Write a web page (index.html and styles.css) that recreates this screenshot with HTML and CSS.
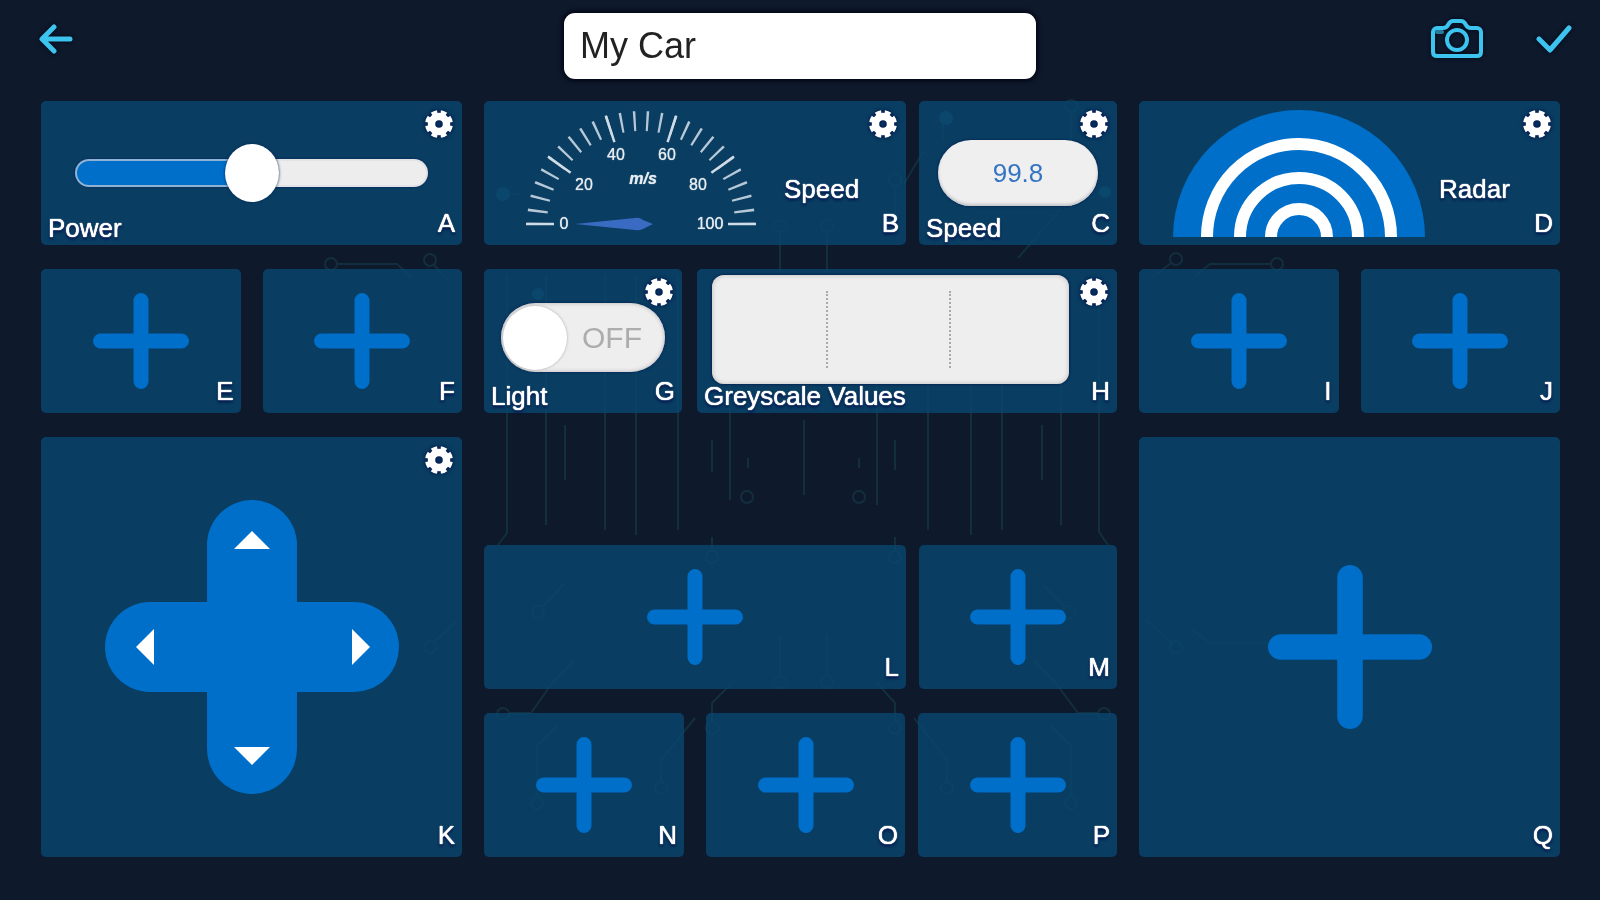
FILE: index.html
```html
<!DOCTYPE html>
<html lang="en">
<head>
  <meta charset="UTF-8">
  <meta name="viewport" content="width=device-width, initial-scale=1.0">
  <title>My Car</title>
  <link rel="stylesheet" href="styles.css">
</head>
<body>
  <!-- Shared icons -->
  <svg class="sprite" aria-hidden="true">
    <symbol id="gear" viewBox="0 0 28 28">
      <circle cx="14" cy="14" r="7.5" fill="none" stroke="#fff" stroke-width="7.4"/>
      <circle cx="14" cy="14" r="11.7" fill="none" stroke="#fff" stroke-width="4.4" pathLength="8" stroke-dasharray="0.62 0.38" stroke-dashoffset="-0.19"/>
    </symbol>
    <symbol id="plus" viewBox="0 0 96 96">
      <path d="M48 7.5v81M7.5 48h81" fill="none" stroke="#006fc9" stroke-width="15" stroke-linecap="round"/>
    </symbol>
    <symbol id="arrow" viewBox="0 0 36 18">
      <path d="M0 18L18 0l18 18z" fill="#fff"/>
    </symbol>
  </svg>

  <!-- Circuit board background -->
  <svg class="circuit" viewBox="0 0 1600 900" preserveAspectRatio="xMidYMid slice" aria-hidden="true">
    <path d="M507 275V533l-9 12M546 275V525M605 275V530M636 275V535M678 275V530M730 275V500M877 275V505M928 275V530M971 275V535M1002 275V530M1061 275V525M1099 275V532l9 13"/>
    <path d="M565 425v55M712 440v32M748 458v10M804 420v75M859 458v10M895 440v30M1042 425v55"/>
    <path d="M780 232v40M827 232v40M895 186v40M943 118v24M1071 112v28M503 194h16M924 150l-20 34M1060 210l-42 48"/>
    <path d="M337 264h60l15 14M434 265l14 15M1271 264h-61l-15 12M1171 263l-18 14"/>
    <path d="M434 642l22-20M1171 642l-26-23M1190 628l20 15h60"/>
    <path d="M712 537v14M895 537v14M565 583l-23 24M1043 585l22 22"/>
    <path d="M780 635v41M827 635v41M575 660l-22 22-22 31h-22M1033 660l22 22 23 31h20"/>
    <path d="M732 683l-20 20v19M877 683l18 20v19M695 718l-34 42v22M914 718l33 42v22"/>
    <path d="M557 726l-20 20v51M1051 726l20 20v51"/>
    <circle cx="747" cy="497" r="6"/><circle cx="859" cy="497" r="6"/>
    <circle cx="712" cy="557" r="6"/><circle cx="895" cy="557" r="6"/>
    <circle cx="538" cy="612" r="6"/><circle cx="1069" cy="612" r="6"/>
    <circle cx="780" cy="682" r="6"/><circle cx="827" cy="682" r="6"/>
    <circle cx="780" cy="226" r="6"/><circle cx="827" cy="226" r="6"/>
    <circle cx="895" cy="180" r="6"/><circle cx="1071" cy="106" r="6"/>
    <circle cx="331" cy="264" r="6"/><circle cx="430" cy="260" r="6"/>
    <circle cx="1277" cy="264" r="6"/><circle cx="1176" cy="259" r="6"/>
    <circle cx="430" cy="647" r="6"/><circle cx="1176" cy="647" r="6"/>
    <circle cx="503" cy="714" r="6"/><circle cx="1104" cy="714" r="6"/>
    <circle cx="712" cy="728" r="6"/><circle cx="895" cy="728" r="6"/>
    <circle cx="661" cy="788" r="6"/><circle cx="947" cy="788" r="6"/>
    <circle cx="537" cy="803" r="6"/><circle cx="1071" cy="803" r="6"/>
    <g class="dots">
      <circle cx="503" cy="194" r="7"/><circle cx="538" cy="294" r="6"/>
      <circle cx="946" cy="118" r="7"/><circle cx="1105" cy="192" r="6"/>
    </g>
  </svg>

  <header class="topbar">
    <button class="icon-btn" aria-label="Back">
      <svg width="36" height="30" viewBox="0 0 36 30"><path d="M32 15H5M16 3L4 15l12 12" stroke-width="5"/></svg>
    </button>
    <input class="name-input" type="text" value="My Car" aria-label="Project name">
    <div class="topbar-actions">
      <button class="icon-btn" aria-label="Camera">
        <svg width="52" height="40" viewBox="0 0 52 40">
          <path d="M6 9h6c3 0 4-1 5-3s3-4 5-4h8c2 0 4 2 5 4s2 3 5 3h6c2 0 4 2 4 4v20c0 3-2 4-4 4H6c-2 0-4-1-4-4V13c0-2 2-4 4-4z" stroke-width="4"/>
          <circle cx="26" cy="21" r="10" stroke-width="4"/>
          <path d="M6 13h5" stroke-width="4" opacity="0.6"/>
        </svg>
      </button>
      <button class="icon-btn" aria-label="Save">
        <svg width="36" height="30" viewBox="0 0 36 30"><path d="M3 15l11 11L33 4" stroke-width="5"/></svg>
      </button>
    </div>
  </header>

  <main class="board">
    <section class="column">
      <div class="card">
        <input class="slider" id="power" type="range" min="0" max="100" value="50">
        <label class="name" for="power">Power</label>
        <span class="slot">A</span>
        <button class="gear-btn" aria-label="Power settings"><svg><use href="#gear"/></svg></button>
      </div>
      <div class="row row-split">
        <button class="card add"><svg class="plus"><use href="#plus"/></svg><span class="slot">E</span></button>
        <button class="card add"><svg class="plus"><use href="#plus"/></svg><span class="slot">F</span></button>
      </div>
      <div class="card card-large">
        <div class="dpad">
          <button class="up" aria-label="Up"><svg><use href="#arrow"/></svg></button>
          <button class="left" aria-label="Left"><svg><use href="#arrow"/></svg></button>
          <span class="middle"></span>
          <button class="right" aria-label="Right"><svg><use href="#arrow"/></svg></button>
          <button class="down" aria-label="Down"><svg><use href="#arrow"/></svg></button>
        </div>
        <span class="slot">K</span>
        <button class="gear-btn" aria-label="Direction settings"><svg><use href="#gear"/></svg></button>
      </div>
    </section>

    <section class="column">
      <div class="row row-wide-first">
        <div class="card">
          <div class="widget">
            <svg class="gauge" viewBox="-116 -116 232 130">
              <path class="ticks" d="M-104 0A104 103 0 0 1 104 0" pathLength="25"/>
              <g class="marks">
                <path d="M-115 0h28"/>
                <path d="M-115 0h28" transform="rotate(36)"/>
                <path d="M-114 0h28" transform="rotate(72)"/>
                <path d="M-114 0h28" transform="rotate(108)"/>
                <path d="M-115 0h28" transform="rotate(144)"/>
                <path d="M-115 0h28" transform="rotate(180)"/>
              </g>
              <path class="needle" d="M-66 0L-6-6q4-1 8 2L12 0 2 5q-4 2-8 1z"/>
              <text x="-77" y="5">0</text>
              <text x="-57" y="-34">20</text>
              <text x="-25" y="-64">40</text>
              <text x="26" y="-64">60</text>
              <text x="57" y="-34">80</text>
              <text x="69" y="5">100</text>
              <text class="unit" x="2" y="-40">m/s</text>
            </svg>
            <span class="caption">Speed</span>
          </div>
          <span class="slot">B</span>
          <button class="gear-btn" aria-label="Gauge settings"><svg><use href="#gear"/></svg></button>
        </div>
        <div class="card">
          <output class="readout">99.8</output>
          <span class="name">Speed</span>
          <span class="slot">C</span>
          <button class="gear-btn" aria-label="Speed settings"><svg><use href="#gear"/></svg></button>
        </div>
      </div>
      <div class="row row-wide-last">
        <div class="card">
          <label class="switch">
            <input type="checkbox" role="switch" aria-label="Light">
            <span>OFF</span>
          </label>
          <span class="name">Light</span>
          <span class="slot">G</span>
          <button class="gear-btn" aria-label="Light settings"><svg><use href="#gear"/></svg></button>
        </div>
        <div class="card">
          <div class="grey-values"><span></span><span></span><span></span></div>
          <span class="name">Greyscale Values</span>
          <span class="slot">H</span>
          <button class="gear-btn" aria-label="Greyscale settings"><svg><use href="#gear"/></svg></button>
        </div>
      </div>
      <div class="row row-wide-first push-down">
        <button class="card add"><svg class="plus"><use href="#plus"/></svg><span class="slot">L</span></button>
        <button class="card add"><svg class="plus"><use href="#plus"/></svg><span class="slot">M</span></button>
      </div>
      <div class="row row-three">
        <button class="card add"><svg class="plus"><use href="#plus"/></svg><span class="slot">N</span></button>
        <button class="card add"><svg class="plus"><use href="#plus"/></svg><span class="slot">O</span></button>
        <button class="card add"><svg class="plus"><use href="#plus"/></svg><span class="slot">P</span></button>
      </div>
    </section>

    <section class="column">
      <div class="card">
        <div class="widget">
          <svg class="radar" viewBox="-126 -128 252 128">
            <ellipse rx="126" ry="127" fill="#006fc9"/>
            <g fill="none" stroke="#fff" stroke-width="12">
              <ellipse rx="92" ry="93"/>
              <ellipse rx="59" ry="59"/>
              <ellipse rx="28" ry="28"/>
            </g>
          </svg>
          <span class="caption">Radar</span>
        </div>
        <span class="slot">D</span>
        <button class="gear-btn" aria-label="Radar settings"><svg><use href="#gear"/></svg></button>
      </div>
      <div class="row row-split">
        <button class="card add"><svg class="plus"><use href="#plus"/></svg><span class="slot">I</span></button>
        <button class="card add"><svg class="plus"><use href="#plus"/></svg><span class="slot">J</span></button>
      </div>
      <button class="card card-large add"><svg class="plus"><use href="#plus"/></svg><span class="slot">Q</span></button>
    </section>
  </main>
</body>
</html>
```

FILE: styles.css
```css
* {
  box-sizing: border-box;
}

body {
  margin: 0;
  min-height: 100vh;
  display: flex;
  flex-direction: column;
  background: #0e192c;
  color: #fff;
  font-family: "Liberation Sans", Arial, sans-serif;
  font-size: 26px;
  line-height: 28px;
}

button {
  padding: 0;
  border: none;
  background: none;
  color: inherit;
  font: inherit;
  cursor: pointer;
}

svg {
  display: block;
}

.sprite {
  position: absolute;
  width: 0;
  height: 0;
}

.circuit {
  position: fixed;
  inset: 0;
  width: 100%;
  height: 100%;
  z-index: -1;
  fill: none;
  stroke: #132f3f;
  stroke-width: 2;
}

.circuit .dots {
  fill: #17405a;
  stroke: none;
}

/* Top bar */
.topbar {
  display: grid;
  grid-template-columns: 1fr 472px 1fr;
  align-items: start;
  padding: 13px 28px 0;
  height: 101px;
}

.icon-btn {
  justify-self: start;
  height: 52px;
  display: flex;
  align-items: center;
}

.topbar > .icon-btn {
  margin-left: 10px;
}

.icon-btn svg {
  fill: none;
  stroke: #3cc3ee;
  stroke-linejoin: round;
  stroke-linecap: round;
  filter: drop-shadow(0 0 2px #000614);
}

.name-input {
  height: 66px;
  padding: 0 16px;
  border: none;
  border-radius: 11px;
  background: #fff;
  box-shadow: 0 0 4px 2px #000614;
  color: #222;
  font: inherit;
  font-size: 36px;
}

.topbar-actions {
  display: flex;
  justify-content: flex-end;
  gap: 53px;
}

/* Board */
.board {
  flex: 1;
  display: grid;
  grid-template-columns: 421fr 633fr 421fr;
  gap: 22px;
  padding: 0 40px 43px 41px;
}

.column {
  display: flex;
  flex-direction: column;
  gap: 24px;
}

.row {
  display: grid;
}

.row-split {
  grid-template-columns: 1fr 1fr;
  gap: 22px;
}

.row-wide-first {
  grid-template-columns: 422fr 198fr;
  gap: 13px;
}

.row-wide-last {
  grid-template-columns: 198fr 420fr;
  gap: 15px;
}

.row-three {
  grid-template-columns: 221fr 211fr 198fr;
}

.row-three .card:nth-child(1) {
  margin-right: 22px;
}

.row-three .card:nth-child(2) {
  margin-right: 13px;
}

.push-down {
  margin-top: auto;
}

/* Cards: everything shares one cell and is aligned to its corner */
.card {
  display: grid;
  grid-template: minmax(0, 1fr) / minmax(0, 1fr);
  min-height: 144px;
  border-radius: 5px;
  background: rgba(8, 73, 115, 0.75);
}

.card > * {
  grid-area: 1 / 1;
  place-self: center;
}

.card-large {
  flex: 1;
}

.card > .slot {
  place-self: end;
  margin: 0 7px 8px 0;
}

.card > .name {
  place-self: end start;
  margin: 0 0 3px 7px;
}

.slot,
.name,
.caption {
  text-shadow: 0 0 1px #fff, 0 0 1px #fff, 0 2px 3px #00084a;
}

.card > .gear-btn {
  place-self: start end;
  margin: 9px;
  border-radius: 50%;
  filter: drop-shadow(0 0 2px #00084a);
}

.gear-btn svg {
  width: 28px;
  height: 28px;
}

.plus {
  width: 96px;
  height: 96px;
}

.card-large .plus {
  width: 164px;
  height: 164px;
}

/* Power slider */
.slider {
  appearance: none;
  width: 84%;
  height: 56px;
  margin: 0;
  background: none;
}

.slider::-webkit-slider-runnable-track {
  height: 28px;
  border: 2px solid transparent;
  border-radius: 14px;
  background:
    linear-gradient(90deg, #006fc9 50%, #ededee 50%) padding-box,
    linear-gradient(90deg, #8fb1d3 50%, #e2e3e6 50%) border-box;
  box-shadow: 0 0 2px #00205a;
}

.slider::-webkit-slider-thumb {
  appearance: none;
  width: 54px;
  height: 58px;
  margin-top: -17px;
  border-radius: 50%;
  background: #fff;
  box-shadow: 0 0 3px #002a5c;
}

/* Gauge and radar */
.card > .widget {
  place-self: stretch start;
  display: flex;
  align-items: center;
}

.caption {
  padding-top: 32px;
}

.gauge {
  width: 232px;
  margin: 0 27px 0 41px;
}

.radar {
  width: 252px;
  margin: 0 14px 0 34px;
}

.gauge .ticks {
  fill: none;
  stroke: #b6c8d6;
  stroke-width: 20;
  stroke-dasharray: 0.18 0.82;
  stroke-dashoffset: 0.09;
}

.gauge .marks {
  stroke: #d0dce5;
  stroke-width: 2.5;
}

.gauge .needle {
  fill: #3a6bc2;
}

.gauge text {
  fill: #e6edf2;
  font-size: 16px;
  text-anchor: middle;
  text-shadow: 0 0 1px #e6edf2;
}

.gauge .unit {
  font-style: italic;
  font-weight: bold;
}

/* Readout */
.readout {
  width: 160px;
  padding: 19px 0;
  border-radius: 33px;
  background: #efeff0;
  box-shadow: 0 0 3px #00205a, inset 0 -2px 3px #c4c4c8;
  color: #3474c2;
  text-align: center;
}

/* Light switch */
.switch {
  display: flex;
  align-items: center;
  gap: 15px;
  width: 164px;
  height: 69px;
  padding: 2px;
  margin-bottom: 7px;
  border-radius: 35px;
  background: #eeeeef;
  box-shadow: 0 0 3px #00205a, inset 0 0 4px #b0b0b4;
  color: #adadad;
  font-size: 30px;
}

.switch input {
  appearance: none;
  width: 64px;
  height: 64px;
  margin: 0;
  border-radius: 50%;
  background: #fff;
  box-shadow: 0 0 3px #aaa;
}

/* Greyscale sensor */
.card > .grey-values {
  place-self: start;
  display: grid;
  grid-template-columns: 114fr 122fr 120fr;
  width: 85%;
  height: 109px;
  margin: 6px 0 0 15px;
  padding: 16px 0;
  border-radius: 12px;
  background: #eee;
  box-shadow: 0 0 3px #00104a, inset 0 0 5px #bbb;
}

.grey-values span + span {
  border-left: 2px dotted #aaa;
}

/* Direction pad */
.dpad {
  display: grid;
  grid-template: 102px 90px 102px / 102px 90px 102px;
  grid-template-areas:
    ". up ."
    "left middle right"
    ". down .";
}

.dpad > * {
  background: #006fc9;
}

.dpad button {
  display: flex;
  justify-content: center;
  padding-top: 31px;
}

.dpad svg {
  width: 36px;
  height: 18px;
}

.dpad .up {
  grid-area: up;
  border-radius: 45px 45px 0 0;
}

.dpad .down {
  grid-area: down;
  align-items: flex-end;
  padding: 0 0 29px;
  border-radius: 0 0 45px 45px;
}

.dpad .left {
  grid-area: left;
  align-items: center;
  justify-content: flex-start;
  padding: 0 0 0 22px;
  border-radius: 45px 0 0 45px;
}

.dpad .right {
  grid-area: right;
  align-items: center;
  justify-content: flex-end;
  padding: 0 20px 0 0;
  border-radius: 0 45px 45px 0;
}

.dpad .middle {
  grid-area: middle;
}

.dpad .down svg {
  transform: rotate(180deg);
}

.dpad .left svg {
  transform: rotate(-90deg);
}

.dpad .right svg {
  transform: rotate(90deg);
}
```
